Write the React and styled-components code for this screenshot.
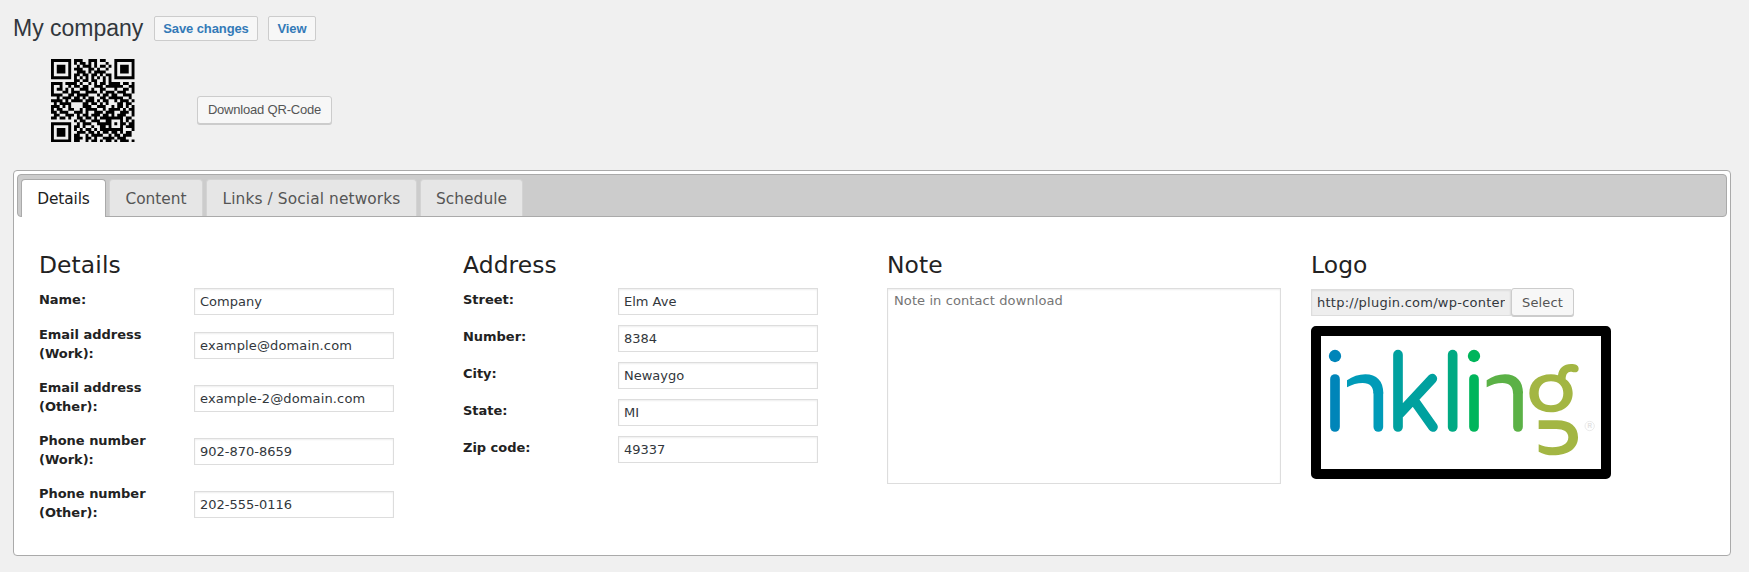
import React from "react";
import styled, { createGlobalStyle } from "styled-components";

const GlobalStyle = createGlobalStyle`
  *, *::before, *::after { box-sizing: border-box; }
  body { margin: 0; background: #f0f0f0; }
`;

const sans = `"Liberation Sans", Arial, sans-serif`;
const wide = `Verdana, "DejaVu Sans", sans-serif`;

const Page = styled.main`
  width: 1749px;
  height: 572px;
  padding: 16px 18px 16px 13px;
  font-family: ${sans};
  overflow: hidden;
`;

const Header = styled.header`
  display: flex;
  height: 25px;
  align-items: center;
`;

const Title = styled.h1`
  width: 141px;
  margin: 0;
  font-size: 23px;
  line-height: 25px;
  font-weight: 400;
  color: #32373c;
  white-space: nowrap;
`;

const HeaderButton = styled.button`
  width: ${(p) => p.$width}px;
  height: 25px;
  margin-right: 10px;
  padding: 0;
  border: 1px solid #ccc;
  border-radius: 2px;
  background: #f7f7f7;
  color: #337ab7;
  font: 700 13px/23px ${sans};
  letter-spacing: -0.1px;
`;

const QrRow = styled.section`
  display: flex;
  height: 129px;
  padding: 17.5px 0 0 38.3px;
`;

const QrSvg = styled.svg`
  display: block;
  width: 83.5px;
  height: 83.5px;
`;

const Button = styled.button`
  flex: none;
  width: ${(p) => p.$width}px;
  height: 28px;
  padding: ${(p) => (p.$wide ? "1px 0 0" : 0)};
  border: 1px solid #ccc;
  border-radius: 3px;
  background: #f7f7f7;
  box-shadow: 0 1px 0 #ccc;
  color: #555;
  font: 13px/26px ${(p) => (p.$wide ? wide : sans)};
  letter-spacing: ${(p) => (p.$wide ? 0.15 : -0.2)}px;
`;

const DownloadButton = styled(Button)`
  margin: 37.5px 0 0 62.2px;
`;

const Panel = styled.section`
  height: 386px;
  padding: 3px;
  border: 1px solid #aaa;
  border-radius: 4px;
  background: #fff;
  font-family: ${wide};
  color: #222;
`;

const Tabs = styled.nav`
  display: flex;
  align-items: flex-end;
  gap: 3px;
  height: 43px;
  padding-left: 3px;
  border: 1px solid #aaa;
  border-radius: 4px;
  background: #ccc;
`;

const Tab = styled.button`
  width: ${(p) => p.$width}px;
  height: ${(p) => (p.$active ? 38 : 37)}px;
  margin-bottom: ${(p) => (p.$active ? -1 : 0)}px;
  padding: ${(p) => (p.$active ? 0 : "2px 0 0")};
  border: 1px solid ${(p) => (p.$active ? "#aaa" : "#d3d3d3")};
  border-bottom: 0;
  border-radius: 4px 4px 0 0;
  background: ${(p) => (p.$active ? "#fff" : "#e6e6e6")};
  color: ${(p) => (p.$active ? "#212121" : "#555")};
  font: 15.4px/34px ${wide};
  letter-spacing: ${(p) => p.$spacing}px;
  white-space: nowrap;
`;

const Columns = styled.div`
  display: grid;
  grid-template-columns: repeat(4, 424px);
  padding: 32px 0 0 22px;
`;

const Column = styled.section`
  min-width: 0;
`;

const Heading = styled.h2`
  height: 39px;
  margin: 0;
  font-size: 23.4px;
  line-height: 32px;
  font-weight: 400;
  letter-spacing: 0.1px;
`;

const Fields = styled.div`
  display: flex;
  flex-direction: column;
  gap: 10px;
`;

const Field = styled.label`
  display: grid;
  grid-template-columns: 155px 200px;
  align-items: start;
  height: ${(p) => (p.$double ? 43 : 27)}px;
`;

const FieldLabel = styled.span`
  padding-top: ${(p) => (p.$double ? 0 : 2)}px;
  font-size: 13px;
  line-height: 19px;
  font-weight: 700;
  letter-spacing: -0.03px;
  white-space: pre-line;
`;

const Input = styled.input`
  width: 200px;
  height: 27px;
  margin: ${(p) => p.$top || 0}px 0 0;
  padding: 0 5px;
  border: 1px solid #ddd;
  border-radius: 0;
  outline: 0;
  background: ${(p) => (p.readOnly ? "#eee" : "#fff")};
  box-shadow: inset 0 1px 2px rgba(0, 0, 0, 0.07);
  color: #32373c;
  font: 13px/19px ${wide};
  letter-spacing: ${(p) => p.$spacing || 0}px;
`;

const Note = styled.textarea`
  display: block;
  width: 394px;
  height: 196px;
  padding: 2px 6px;
  border: 1px solid #ddd;
  outline: 0;
  resize: none;
  box-shadow: inset 0 1px 2px rgba(0, 0, 0, 0.07);
  font: 13px/19px ${wide};
  letter-spacing: 0.1px;
  &::placeholder { color: #757575; opacity: 1; }
`;

const FilePicker = styled.div`
  display: flex;
  height: 38px;
`;

const LogoFrame = styled.div`
  width: 300px;
  height: 153px;
  border: 10px solid #000;
  border-radius: 5px;
  background: #000;
`;

const LogoSvg = styled.svg`
  display: block;
  width: 280px;
  height: 133px;
  background: #fff;
`;

const qrRows = [
  "11111110111001110110001111111",
  "10000010101101010001001000001",
  "10111010010111010110101011101",
  "10111010111001101001001011101",
  "10111010011101011110001011101",
  "10000010110110110101101000001",
  "11111110101010101010101111111",
  "00000000110110110010100000000",
  "11110111101001010110111101101",
  "10010010110110011101111110011",
  "10110101001110100110001001101",
  "10001101110011110101110111001",
  "11110011011110001011011001110",
  "00101110110101100110111110010",
  "11110101111011101011001011101",
  "01011110000110110101000110110",
  "11101010000111001110010110101",
  "10110011001011110010111101011",
  "11011100111010011101110011101",
  "01100111010110111011010111001",
  "11011010011011010111111110110",
  "00000000101100111001100010101",
  "11111110010111001111101011011",
  "10000010110100100110100010111",
  "10111010101011010111111110001",
  "10111010011101101011011010110",
  "10111010110010111100101101110",
  "10000010111011010011110111000",
  "11111110110010110101101011101",
];

const qrPath = qrRows
  .map((row, y) =>
    [...row].map((v, x) => (v === "1" ? `M${x} ${y}h1v1h-1z` : "")).join("")
  )
  .join("");

const QrCode = () => (
  <QrSvg viewBox="0 0 29 29" role="img" aria-label="QR code">
    <path d={qrPath} fill="#000" />
  </QrSvg>
);

const InklingLogo = () => (
  <LogoSvg viewBox="93 288 840 399" preserveAspectRatio="none" role="img" aria-label="Inkling">
    <g fill="none" strokeWidth="29" strokeLinecap="round">
      <circle cx="135" cy="348" r="18.5" fill="#0085b9" />
      <path d="M135 417V561" stroke="#0085b9" />
      <path d="M265 561V460" stroke="#009bb8" />
      <path
        d="M171 421Q196 403 226 403C260 403 280 423 280 460H250C250 440 240 429 218 429Q194 429 171 442Z"
        fill="#009bb8"
        stroke="none"
      />
      <path d="M324 344V561M427 416L330 520M371 479L429 561" stroke="#00a19f" />
      <path d="M488 344V561" stroke="#00aa83" />
      <circle cx="552" cy="348" r="18.5" fill="#00b55b" />
      <path d="M552 417V561" stroke="#00b55b" />
      <path d="M684 561V460" stroke="#5bb146" />
      <path
        d="M590 421Q615 403 645 403C679 403 699 423 699 460H669C669 440 659 429 637 429Q613 429 590 442Z"
        fill="#5bb146"
        stroke="none"
      />
      <path
        fill="#a3b643"
        stroke="none"
        fillRule="evenodd"
        d="M783 403C791 403 798 404 804 406C807 384 821 372 843 372C857 372 866 376 866 386C866 396 857 399 847 396C834 393 827 402 827 418C841 428 848 443 848 460C848 494 821 517 783 517C743 517 718 494 718 460C718 426 743 403 783 403ZM783 424C760 424 746 438 746 460C746 482 760 496 783 496C806 496 820 482 820 460C820 438 806 424 783 424Z"
      />
      <path
        fill="#a3b643"
        stroke="none"
        d="M746 541H801C841 541 864 560 864 592C864 625 836 646 789 646Q765 646 746 635V613Q764 622 787 622C817 622 835 611 835 592C835 575 821 567 799 567H746Z"
      />
    </g>
    <circle cx="899" cy="558" r="14" fill="none" stroke="#e6e6e6" strokeWidth="2.5" />
    <text x="899" y="565" textAnchor="middle" fill="#e2e2e2" fontFamily="Liberation Sans" fontWeight="700" fontSize="19">
      R
    </text>
  </LogoSvg>
);

const tabs = [
  ["Details", 85, -0.15],
  ["Content", 94, 0],
  ["Links / Social networks", 211, 0.1],
  ["Schedule", 103, 0.05],
];

const details = [
  ["Name:", "Company"],
  ["Email address\n(Work):", "example@domain.com"],
  ["Email address\n(Other):", "example-2@domain.com"],
  ["Phone number\n(Work):", "902-870-8659"],
  ["Phone number\n(Other):", "202-555-0116"],
];

const address = [
  ["Street:", "Elm Ave"],
  ["Number:", "8384"],
  ["City:", "Newaygo"],
  ["State:", "MI"],
  ["Zip code:", "49337"],
];

const FieldList = ({ items }) => (
  <Fields>
    {items.map(([label, value]) => {
      const double = label.includes("\n");
      return (
        <Field key={label} $double={double}>
          <FieldLabel $double={double}>{label}</FieldLabel>
          <Input
            $top={double ? 7 : 0}
            $spacing={value.includes("@") ? 0.14 : 0}
            defaultValue={value}
          />
        </Field>
      );
    })}
  </Fields>
);

export default function App() {
  return (
    <Page>
      <GlobalStyle />
      <Header>
        <Title>My company</Title>
        <HeaderButton $width={104}>Save changes</HeaderButton>
        <HeaderButton $width={48}>View</HeaderButton>
      </Header>
      <QrRow>
        <QrCode />
        <DownloadButton $width={135}>Download QR-Code</DownloadButton>
      </QrRow>
      <Panel>
        <Tabs>
          {tabs.map(([name, width, spacing], i) => (
            <Tab key={name} $width={width} $spacing={spacing} $active={i === 0}>
              {name}
            </Tab>
          ))}
        </Tabs>
        <Columns>
          <Column>
            <Heading>Details</Heading>
            <FieldList items={details} />
          </Column>
          <Column>
            <Heading>Address</Heading>
            <FieldList items={address} />
          </Column>
          <Column>
            <Heading>Note</Heading>
            <Note placeholder="Note in contact download" />
          </Column>
          <Column>
            <Heading>Logo</Heading>
            <FilePicker>
              <Input
                $top={1}
                $spacing={0.25}
                readOnly
                value="http://plugin.com/wp-content/uploads/logo.png"
              />
              <Button $width={63} $wide>
                Select
              </Button>
            </FilePicker>
            <LogoFrame>
              <InklingLogo />
            </LogoFrame>
          </Column>
        </Columns>
      </Panel>
    </Page>
  );
}
